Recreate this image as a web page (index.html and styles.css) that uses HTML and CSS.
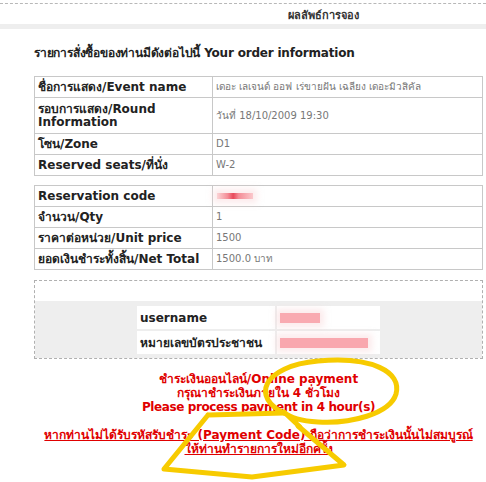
FILE: index.html
```html
<!DOCTYPE html>
<html lang="th">

<head>
    <meta charset="UTF-8">
    <title>ผลลัพธ์การจอง</title>
    <link rel="stylesheet" href="styles.css">
</head>

<body>
    <div class="top-rule"></div>
    <header class="page-head">
        <span class="page-head-title">ผลลัพธ์การจอง</span>
    </header>
    <div class="head-bar"></div>

    <main class="content">
        <h2 class="order-title">รายการสั่งซื้อของท่านมีดังต่อไปนี้ Your order information</h2>

        <table class="info-table">
            <tr>
                <th>ชื่อการแสดง/Event name</th>
                <td>เดอะ เลเจนด์ ออฟ เร่ขายฝัน เฉลียง เดอะมิวสิคัล</td>
            </tr>
            <tr class="row-double">
                <th>รอบการแสดง/Round Information</th>
                <td>วันที่ 18/10/2009 19:30</td>
            </tr>
            <tr>
                <th>โซน/Zone</th>
                <td>D1</td>
            </tr>
            <tr>
                <th>Reserved seats/ที่นั่ง</th>
                <td>W-2</td>
            </tr>
        </table>

        <table class="info-table">
            <tr>
                <th>Reservation code</th>
                <td><span class="blur blur-code"></span></td>
            </tr>
            <tr>
                <th>จำนวน/Qty</th>
                <td>1</td>
            </tr>
            <tr>
                <th>ราคาต่อหน่วย/Unit price</th>
                <td>1500</td>
            </tr>
            <tr>
                <th>ยอดเงินชำระทั้งสิ้น/Net Total</th>
                <td>1500.0 บาท</td>
            </tr>
        </table>

        <div class="member-box">
            <div class="member-band">
                <table class="member-table">
                    <tr>
                        <th>username</th>
                        <td><span class="blur blur-user"></span></td>
                    </tr>
                    <tr>
                        <th>หมายเลขบัตรประชาชน</th>
                        <td><span class="blur blur-id"></span></td>
                    </tr>
                </table>
            </div>
        </div>

        <div class="pay-note">
            <p>ชำระเงินออนไลน์/Online payment<br>กรุณาชำระเงินภายใน 4 ชั่วโมง<br><span class="tight">Please process payment in 4 hour(s)</span></p>
            <p><a href="#">หากท่านไม่ได้รับรหัสรับชำระ (Payment Code) ถือว่าการชำระเงินนั้นไม่สมบูรณ์<br>ให้ท่านทำรายการใหม่อีกครั้ง</a></p>
        </div>
    </main>

    <!-- hand drawn marks over the screenshot -->
    <svg class="marks" width="486" height="482" viewBox="0 0 486 482">
        <path d="M286 414 C 250 398, 262 366, 318 361 C 372 356, 402 372, 396 394 C 390 414, 350 424, 318 422 C 300 421, 290 418, 284 412 L 300 427"
            fill="none" stroke="#f7cb00" stroke-width="5" stroke-linecap="round" stroke-linejoin="round" />
        <path d="M208 415 L 284 413 M 298 426 L 344 465 L 252 477 L 164 469 L 208 415"
            fill="none" stroke="#f7cb00" stroke-width="5" stroke-linecap="round" stroke-linejoin="round" />
    </svg>
</body>

</html>
```

FILE: styles.css
```css
* {
    box-sizing: border-box;
}

body {
    margin: 0;
    width: 486px;
    height: 482px;
    overflow: hidden;
    position: relative;
    background: #fff;
    color: #222;
    font-family: Tahoma, 'DejaVu Sans', sans-serif;
    font-size: 11px;
}

.top-rule {
    margin-top: 3px;
    border-top: 1px dashed #b8b8b8;
}

.page-head {
    padding: 5px 0 0 160px;
    height: 20px;
    line-height: 13px;
    text-align: center;
}

.page-head-title {
    font-weight: bold;
    font-size: 11px;
    color: #333;
}

.head-bar {
    height: 5px;
    background: #eeeeee;
}

.content {
    padding: 0 3px 0 34px;
}

.order-title {
    margin: 17px 0 15px;
    font-size: 12px;
    line-height: 15px;
    letter-spacing: -0.2px;
    color: #222;
}

.info-table {
    width: 100%;
    border-collapse: collapse;
    margin-bottom: 9px;
}

.info-table tr {
    height: 21px;
}

.info-table th,
.info-table td {
    border: 1px solid #c8c8c8;
    padding: 0 3px;
    line-height: 14px;
    text-align: left;
    vertical-align: middle;
}

.info-table th {
    width: 178px;
    font-size: 12px;
    color: #222;
}

.info-table td {
    font-size: 10px;
    color: #777;
}

.info-table .row-double {
    height: 36px;
}

.info-table .row-double th {
    line-height: 13px;
}

.blur {
    display: inline-block;
    vertical-align: middle;
    height: 6px;
    background: linear-gradient(90deg, #fbd4d6, #f48c96 30%, #e8485a 45%, #f48c96 60%, #fbc8cc);
    box-shadow: 0 0 6px 4px rgba(250, 215, 218, 0.5);
}

.blur-code {
    width: 36px;
    margin-left: 1px;
}

.blur-user {
    width: 40px;
    height: 10px;
    background: #f9aab1;
}

.blur-id {
    width: 88px;
    height: 10px;
    background: #f9a7ae;
}

.member-box {
    margin-top: 10px;
    border: 1px dashed #b0b0b0;
    padding-top: 20px;
}

.member-band {
    background: #eeeeee;
    padding: 5px 0 4px 102px;
}

.member-table {
    border-collapse: collapse;
    width: 243px;
    background: #fff;
}

.member-table tr {
    height: 24px;
}

.member-table th,
.member-table td {
    padding: 0 3px;
    line-height: 14px;
    text-align: left;
    border-bottom: 2px solid #eee;
}

.member-table tr:last-child th,
.member-table tr:last-child td {
    border-bottom: 0;
}

.member-table th {
    width: 139px;
    font-size: 12px;
    color: #222;
    border-right: 2px solid #eee;
}

.pay-note {
    margin-top: 13px;
    text-align: center;
    color: #e00000;
    font-weight: bold;
    font-size: 12px;
    line-height: 14px;
}

.pay-note p {
    margin: 0 0 14px;
}

.pay-note .tight {
    letter-spacing: -0.4px;
}

.pay-note a {
    color: #e00000;
}

.marks {
    position: absolute;
    left: 0;
    top: 0;
    pointer-events: none;
}
```
